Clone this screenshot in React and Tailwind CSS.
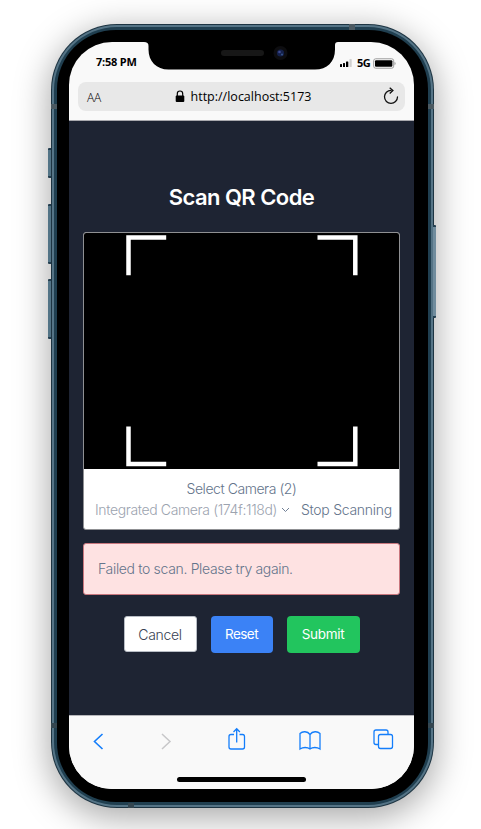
function Notch() {
  return (
    <svg className="absolute top-0 left-[75px]" width="196" height="29" viewBox="0 0 196 29">
      <path d="M0 0H194C192 0 191 1 191 3V7.500C191 20 183 27.500 171 27.500H24.500C12.500 27.500 4.500 19.500 4.500 7.500V4C4.500 1 3 0 0 0Z" fill="#000" />
      <rect x="77" y="8" width="43" height="6" rx="3" fill="#171717" />
      <circle cx="136.500" cy="11" r="7" fill="#0d0d10" />
      <circle cx="136.500" cy="11" r="3.600" fill="#14204a" />
      <circle cx="135.500" cy="10" r="1.300" fill="#3e4a92" />
      <circle cx="138" cy="12.500" r="1" fill="#35558a" />
    </svg>
  );
}

function StatusBar() {
  return (
    <div className="flex h-[40px] items-center justify-between pr-[18px] pl-[27px] font-['Open_Sans',sans-serif] text-[11px] font-bold text-black">
      <span className="tracking-[-0.2px]">7:58 PM</span>
      <div className="flex items-center pt-[2px]">
        <svg width="12" height="8" viewBox="0 0 12 8">
          <rect x="0" y="5" width="2" height="3" rx=".5" />
          <rect x="3" y="4" width="2" height="4" rx=".5" />
          <rect x="6" y="2.500" width="2.300" height="5.500" rx=".5" />
          <rect x="9.500" y="0" width="2.200" height="8" rx=".5" fill="#d0d0d0" />
        </svg>
        <span className="ml-[5px] w-[16px] tracking-[-0.5px]">5G</span>
        <svg width="23" height="11" viewBox="0 0 23 11">
          <rect x=".7" y=".8" width="20" height="9.400" rx="2" fill="#fff" stroke="#999" />
          <rect x="2" y="2.200" width="17.400" height="6.600" rx="1" />
          <path d="M21.500 4c1.500.5 1.500 2.500 0 3Z" fill="#999" />
        </svg>
      </div>
    </div>
  );
}

function AddressBar() {
  return (
    <div className="mx-[9px] flex h-[29px] items-center justify-between rounded-[8px] bg-[#e8e8e8] pr-[6px] pl-[9px] font-['Open_Sans',sans-serif] text-black">
      <span className="w-[16px] pt-[2px] text-[12px] font-light tracking-[-0.3px]">AA</span>
      <div className="flex items-center">
        <svg className="mr-[6px]" width="10" height="13" viewBox="0 0 10 13">
          <path d="M2.300 6V3.700a2.700 2.700 0 0 1 5.400 0V6" fill="none" stroke="#000" strokeWidth="1.200" />
          <rect x=".7" y="5.500" width="8.600" height="6.500" rx="1" />
        </svg>
        <span className="pt-[1px] text-[12.500px] tracking-[0px] whitespace-nowrap">http://localhost:5173</span>
      </div>
      <svg className="-mt-[2px]" width="16" height="18" viewBox="0 0 16 18" fill="none" stroke="#111" strokeWidth="1.300">
        <path d="M8 3.400A6.500 6.500 0 1 0 14.500 10" strokeLinecap="round" />
        <path d="M6.700.7 9.900 3.500 6.700 6.400" />
      </svg>
    </div>
  );
}

function ScannerView() {
  return (
    <div className="h-[298px] overflow-hidden rounded-[3px] border border-[#8f9093] bg-white">
      <div className="flex h-[236px] items-center justify-center bg-black">
        <svg width="232" height="232" viewBox="0 0 232 232" fill="none" stroke="#fff" strokeWidth="4.500">
          <path d="M2.500 40.300V2.500H40.200M191.500 2.500H229.300V40.300M229.300 191.500V229H191.500M40.200 229H2.500V191.500" />
        </svg>
      </div>
      <div className="flex flex-col pt-[9px] leading-[21px] text-[#64748b]">
        <span className="text-center tracking-[-0.45px]">Select Camera (2)</span>
        <div className="flex items-center pl-[11px] whitespace-nowrap">
          <span className="w-[186px] tracking-[-0.36px] text-[#9ca3af]">Integrated Camera (174f:118d)</span>
          <svg width="9" height="6" viewBox="0 0 9 6" fill="none" stroke="#718096">
            <path d="M1 1 4.500 4.500 8 1" />
          </svg>
          <span className="ml-[11px] tracking-[-0.28px]">Stop Scanning</span>
        </div>
      </div>
    </div>
  );
}

function ScanPage() {
  return (
    <main className="flex h-[594px] flex-col bg-[#1e2433] px-[14px] pt-[61px] font-[Inter,sans-serif] text-[14px] font-light">
      <h1 className="mb-[19px] text-center text-[22px] leading-[31px] font-semibold tracking-[-0.55px] text-white">Scan QR Code</h1>
      <ScannerView />
      <div className="mt-[13px] flex h-[52px] items-center rounded-[3px] border border-[#c9777e] bg-[#fee2e2] px-[14px] pb-[1px] text-[#64748b]">
        <span className="tracking-[-0.33px]">Failed to scan. Please try again.</span>
      </div>
      <div className="mt-[20px] flex h-[38px] items-center justify-center gap-[14px]">
        <button className="h-[36px] w-[73px] rounded-[3px] border border-[#b8bdc5] bg-white tracking-[-0.3px] text-[#374151]">Cancel</button>
        <button className="h-[37px] w-[62px] rounded-[4px] bg-[#3b82f6] text-[13.500px] font-normal tracking-[-0.55px] text-white">Reset</button>
        <button className="h-[37px] w-[73px] rounded-[4px] bg-[#22c55e] text-[13.500px] font-normal tracking-[-0.3px] text-white">Submit</button>
      </div>
    </main>
  );
}

function Toolbar() {
  return (
    <footer className="flex h-[74px] flex-col border-t border-[#b7b7bb] bg-[#f9f9f9]">
      <svg width="345" height="50" viewBox="0 1 345 50" fill="none" stroke="#147efb" strokeWidth="1.300">
        <path d="M33.500 19 25.500 26.500 33.500 34" strokeWidth="1.600" />
        <path d="M93 19 101 26.500 93 34" stroke="#c7c7c9" strokeWidth="1.500" />
        <path d="M165 19.500H162a2 2 0 0 0-2 2V32a2 2 0 0 0 2 2H173.500a2 2 0 0 0 2-2V21.500a2 2 0 0 0-2-2H170.500M167.700 27.500V14M164.500 17 167.700 13.700l3.200 3.300" />
        <path d="M241 19.500V33.500M241 19.500C238.500 16 233.500 16 231 18.500V34C234 32 238.500 32 241 34C243.500 32 248 32 251 34V18.500C248.500 16 243.500 16 241 19.500" />
        <rect x="309.500" y="19.500" width="14" height="14" rx="2" />
        <path d="M309.500 29.500H307a2 2 0 0 1-2-2V17a2 2 0 0 1 2-2H317a2 2 0 0 1 2 2V19.500" />
      </svg>
      <div className="mt-[11px] ml-[108px] h-[5px] w-[129px] rounded-full bg-black" />
    </footer>
  );
}

export default function App() {
  return (
    <div className="h-[829px] w-[481px] overflow-hidden bg-white pt-[24px] pl-[51px]">
      <div className="relative h-[784px] w-[383px] rounded-[66px] bg-[#1d3442] p-px shadow-[0_8px_34px_2px_rgba(0,0,0,0.34)]">
        <div className="absolute top-[124px] -left-[3px] h-[30px] w-[3px] rounded-l-[1px] border-y-2 border-[#243f50] bg-[#537486]" />
        <div className="absolute top-[180px] -left-[3px] h-[60px] w-[3px] rounded-l-[1px] border-y-2 border-[#243f50] bg-[#537486]" />
        <div className="absolute top-[255px] -left-[3px] h-[60px] w-[3px] rounded-l-[1px] border-y-2 border-[#243f50] bg-[#537486]" />
        <div className="absolute top-[201px] -right-[2px] h-[93px] w-[3px] rounded-r-[1px] border-y-2 border-[#243f50] bg-[#708c9d]" />
        <div className="h-full rounded-[65px] bg-[#557486] p-[2px]">
          <div className="h-full rounded-[63px] bg-[#203f50] p-[3px]">
            <div className="h-full rounded-[59px] bg-black px-[12px] py-[12px]">
              <div className="relative h-[747px] w-[345px] overflow-hidden rounded-[43px] bg-[#f9f9f9]">
                <Notch />
                <header className="h-[79px] border-b border-[#a9a9ae]">
                  <StatusBar />
                  <AddressBar />
                </header>
                <ScanPage />
                <Toolbar />
              </div>
            </div>
          </div>
        </div>
        <div className="absolute top-[80px] left-0 h-[5px] w-[6px] bg-[#4b5961]" />
        <div className="absolute top-[80px] right-0 h-[5px] w-[6px] bg-[#4b5961]" />
        <div className="absolute bottom-[80px] left-0 h-[5px] w-[6px] bg-[#344650]" />
        <div className="absolute right-0 bottom-[80px] h-[5px] w-[6px] bg-[#344650]" />
        <div className="absolute top-0 right-[79px] h-[6px] w-[6px] bg-[#4b5961]" />
        <div className="absolute bottom-0 left-[77px] h-[5px] w-[6px] bg-[#344650]" />
      </div>
    </div>
  );
}
